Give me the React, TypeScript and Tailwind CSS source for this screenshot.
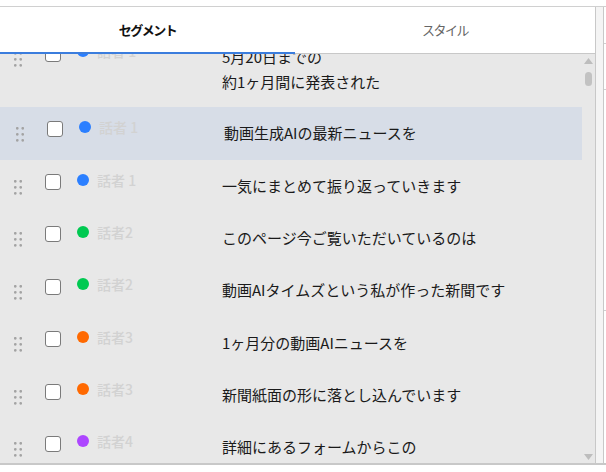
import React from "react";

type Row = {
  label: string;
  color: string;
  lines: string[];
  highlight?: boolean;
  first?: boolean;
};

const rows: Row[] = [
  { label: "話者 1", color: "bg-blue-500", lines: ["5月20日までの", "約1ヶ月間に発表された"], first: true },
  { label: "話者 1", color: "bg-blue-500", lines: ["動画生成AIの最新ニュースを"], highlight: true },
  { label: "話者 1", color: "bg-blue-500", lines: ["一気にまとめて振り返っていきます"] },
  { label: "話者2", color: "bg-green-500", lines: ["このページ今ご覧いただいているのは"] },
  { label: "話者2", color: "bg-green-500", lines: ["動画AIタイムズという私が作った新聞です"] },
  { label: "話者3", color: "bg-orange-500", lines: ["1ヶ月分の動画AIニュースを"] },
  { label: "話者3", color: "bg-orange-500", lines: ["新聞紙面の形に落とし込んでいます"] },
  { label: "話者4", color: "bg-purple-500", lines: ["詳細にあるフォームからこの"] },
];

function Grip() {
  return (
    <svg width="8" height="15" viewBox="0 0 8 15" className="shrink-0 mt-[6.5px]">
      {[1.3, 7.3, 13.3].map((cy) =>
        [1.3, 6.7].map((cx) => <circle key={`${cx}-${cy}`} cx={cx} cy={cy} r="1.35" fill="#a3a3a3" />)
      )}
    </svg>
  );
}

function SegmentRow({ row }: { row: Row }) {
  const base = "flex items-start pt-[13.5px] shrink-0";
  const cls = [
    base,
    row.highlight ? "bg-[#d7dde7] pl-[16px] pb-[14.5px]" : "pl-[14px]",
    row.first ? "mt-[-22.5px] pb-[12px]" : row.highlight ? "" : "pb-[13.9px]",
  ].join(" ");
  return (
    <div className={cls}>
      <Grip />
      <div className="ml-[23px] mt-[0.5px] w-[16px] h-[16px] shrink-0 rounded-[3px] border-[1.5px] border-[#7a7a7a] bg-white" />
      <div className={`ml-[16px] w-[12px] h-[12px] shrink-0 rounded-full ${row.color}`} />
      <div className="ml-[8px] mt-[-4px] w-[125px] shrink-0 text-[14px] leading-[20px] font-medium text-[#d2d2d2]">
        {row.label}
      </div>
      <div className="text-[15px] leading-[25px] text-[#1a1a1a] mt-[-1px] mb-[1px]">
        {row.lines.map((l) => (
          <div key={l}>{l}</div>
        ))}
      </div>
    </div>
  );
}

export default function App() {
  return (
    <div className="w-[606px] h-[472px] bg-white overflow-hidden font-['Noto_Sans_CJK_JP','Noto_Sans',sans-serif]">
      <div className="h-[6px]" />
      <div className="flex h-[459px] border-t border-[#d0d0d0] border-b-2 border-b-[#c8c8c8]">
        {/* main panel */}
        <div className="w-[596px] shrink-0 flex flex-col border-r border-[#c8c8c8]">
          <div className="flex h-[47px] shrink-0 bg-white">
            <div className="w-[295px] flex items-center justify-center border-b-2 border-[#3b7ddd] text-[13px] font-bold tracking-[-1.5px] text-[#111]">
              セグメント
            </div>
            <div className="flex-1 flex items-center justify-center border-b border-[#c8c8c8] text-[13px] tracking-[-1.5px] text-[#666]">
              スタイル
            </div>
          </div>
          <div className="flex-1 min-h-0 flex bg-[#e8e8e8]">
            <div className="w-[582px] shrink-0 flex flex-col overflow-hidden">
              {rows.map((r, i) => (
                <SegmentRow key={i} row={r} />
              ))}
            </div>
            <div className="flex-1 flex flex-col items-center justify-between pt-[4px] pb-[3px]">
              <div className="flex flex-col items-center">
                <svg width="9" height="6" viewBox="0 0 9 6">
                  <polygon points="4.5,0 9,6 0,6" fill="#bdbdbd" />
                </svg>
                <div className="mt-[8px] w-[7px] h-[14px] rounded-full bg-[#c2c2c2]" />
              </div>
              <svg width="9" height="6" viewBox="0 0 9 6">
                <polygon points="0,0 9,0 4.5,6" fill="#bdbdbd" />
              </svg>
            </div>
          </div>
        </div>
        {/* side strip */}
        <div className="w-[8px] shrink-0 bg-[#f4f4f4] border-r border-[#c8c8c8]" />
        <div className="w-[2px] shrink-0 flex flex-col">
          <div className="h-[37px] border-b border-[#d0d0d0]" />
          <div className="h-[46px] border-b border-[#d0d0d0]" />
          <div className="h-[221px] border-b border-[#d0d0d0]" />
        </div>
      </div>
    </div>
  );
}
